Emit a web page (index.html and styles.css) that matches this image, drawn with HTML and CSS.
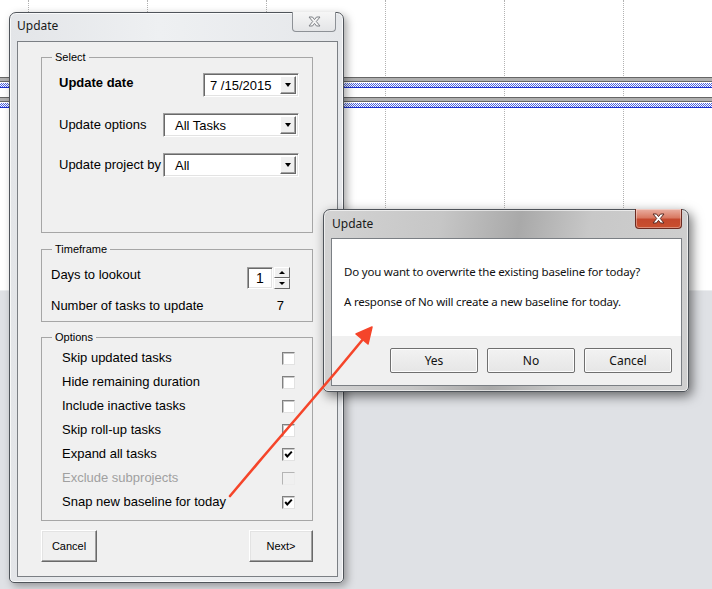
FILE: index.html
```html
<!DOCTYPE html>
<html lang="en">
<head>
    <meta charset="UTF-8">
    <meta name="viewport" content="width=device-width, initial-scale=1.0">
    <title>Update</title>
    <link rel="stylesheet" href="styles.css">
</head>
<body>
    <!-- project view behind the dialogs -->
    <div class="chart">
        <div class="grid-lines">
            <div class="grid-col"></div>
            <div class="grid-col"></div>
            <div class="grid-col"></div>
            <div class="grid-col"></div>
            <div class="grid-col"></div>
            <div class="grid-col"></div>
        </div>
        <div class="bars">
            <div class="bar"><div class="bar-rule"></div><div class="bar-fill"></div></div>
            <div class="bar"><div class="bar-rule"></div><div class="bar-fill"></div></div>
        </div>
    </div>
    <div class="sheet"></div>

    <!-- update wizard -->
    <div class="window wizard">
        <div class="titlebar">
            <span class="title">Update</span>
            <span class="close close-inactive">
                <svg width="13" height="11" viewBox="0 0 13 11"><path d="M1 1H4.5L6.5 3.6L8.5 1H12L8.3 5.5L12 10H8.5L6.5 7.4L4.5 10H1L4.7 5.5Z" fill="#f4f4f4" stroke="#7e8186" stroke-width="1"/></svg>
            </span>
        </div>
        <div class="client">
            <div class="group group-select">
                <span class="group-label">Select</span>
                <div class="group-body select-body">
                    <div class="field-row">
                        <span class="field-label strong">Update date</span>
                        <div class="combo date"><span class="combo-value">7 /15/2015</span><span class="drop"></span></div>
                    </div>
                    <div class="field-row">
                        <span class="field-label">Update options</span>
                        <div class="combo wide"><span class="combo-value">All Tasks</span><span class="drop"></span></div>
                    </div>
                    <div class="field-row">
                        <span class="field-label">Update project by</span>
                        <div class="combo wide"><span class="combo-value">All</span><span class="drop"></span></div>
                    </div>
                </div>
            </div>

            <div class="group group-time">
                <span class="group-label">Timeframe</span>
                <div class="group-body time-body">
                    <div class="field-row top">
                        <span class="field-label">Days to lookout</span>
                        <div class="spinner">
                            <span class="spin-box">1</span>
                            <span class="spin-buttons"><span class="spin-up"></span><span class="spin-down"></span></span>
                        </div>
                    </div>
                    <div class="field-row count-row">
                        <span class="field-label">Number of tasks to update</span>
                        <span class="count">7</span>
                    </div>
                </div>
            </div>

            <div class="group group-options">
                <span class="group-label">Options</span>
                <div class="group-body options-body">
                    <div class="option"><span>Skip updated tasks</span><span class="check"></span></div>
                    <div class="option"><span>Hide remaining duration</span><span class="check"></span></div>
                    <div class="option"><span>Include inactive tasks</span><span class="check"></span></div>
                    <div class="option"><span>Skip roll-up tasks</span><span class="check"></span></div>
                    <div class="option"><span>Expand all tasks</span><span class="check checked"><svg width="9" height="9" viewBox="0 0 9 9"><path d="M1.2 4L3.3 6.4L7.8 1.6" fill="none" stroke="#000" stroke-width="2"/></svg></span></div>
                    <div class="option disabled"><span>Exclude subprojects</span><span class="check"></span></div>
                    <div class="option"><span>Snap new baseline for today</span><span class="check checked"><svg width="9" height="9" viewBox="0 0 9 9"><path d="M1.2 4L3.3 6.4L7.8 1.6" fill="none" stroke="#000" stroke-width="2"/></svg></span></div>
                </div>
            </div>

            <div class="actions">
                <button class="btn3d btn-cancel">Cancel</button>
                <button class="btn3d btn-next">Next&gt;</button>
            </div>
        </div>
    </div>

    <!-- confirmation message box -->
    <div class="window msgbox">
        <div class="titlebar">
            <span class="title">Update</span>
            <span class="close close-active">
                <svg width="13" height="11" viewBox="0 0 13 11"><path d="M1 1H4.5L6.5 3.6L8.5 1H12L8.3 5.5L12 10H8.5L6.5 7.4L4.5 10H1L4.7 5.5Z" fill="#fff" stroke="#5a2a22" stroke-width="1"/></svg>
            </span>
        </div>
        <div class="client">
            <div class="msg-body">
                <p>Do you want to overwrite the existing baseline for today?</p>
                <p>A response of No will create a new baseline for today.</p>
            </div>
            <div class="msg-footer">
                <button class="msg-btn">Yes</button>
                <button class="msg-btn">No</button>
                <button class="msg-btn">Cancel</button>
            </div>
        </div>
    </div>

    <!-- hand drawn annotation -->
    <svg class="annotation" width="712" height="589" viewBox="0 0 712 589">
        <polyline points="230,496 263,457 300,414 335,373 364,338" fill="none" stroke="#f5452a" stroke-width="2.6" stroke-linecap="round" stroke-linejoin="round"/>
        <polygon points="372,327 356,334 368,344" fill="#f5452a" stroke="#f5452a" stroke-width="1.5" stroke-linejoin="round"/>
    </svg>
</body>
</html>
```

FILE: styles.css
```css
body {
    margin: 0;
    width: 712px;
    height: 589px;
    position: relative;
    overflow: hidden;
    font-family: "Liberation Sans", Arial, sans-serif;
    font-size: 13px;
    color: #000;
    background: #fff;
}

/* background chart */
.chart {
    display: grid;
    height: 290px;
}
.chart > div {
    grid-area: 1 / 1;
}
.grid-lines {
    display: flex;
    padding-left: 28px;
}
.grid-col {
    flex: none;
    width: 118px;
    border-left: 1px dotted #b2b2b2;
}
.bars {
    padding-top: 77px;
    display: flex;
    flex-direction: column;
    gap: 9px;
}
.bar {
    height: 11px;
}
.bar-rule {
    height: 3px;
    background: #b0b0b0;
    border-top: 1px solid #666;
    border-bottom: 1px solid #666;
}
.bar-fill {
    margin-top: 1px;
    height: 4px;
    background: repeating-conic-gradient(#4a62e4 0 25%, #fff 0 50%) 0 0 / 2px 2px;
    border-bottom: 1px solid #1b30cf;
}
.sheet {
    height: 298px;
    background: #dfe1e5;
    border-top: 1px solid #eceef0;
}

/* windows */
.window {
    position: absolute;
    box-sizing: border-box;
    display: flex;
    flex-direction: column;
    border: 1px solid #4f545a;
    border-radius: 7px 7px 5px 5px;
}
.wizard {
    left: 9px;
    top: 12px;
    width: 335px;
    height: 571px;
    padding: 0 5px 5px 7px;
    background: linear-gradient(90deg, #e3e5e8, #eef0f2 45%, #e5e7ea);
    box-shadow: inset 0 0 0 1px rgba(255,255,255,0.75), 3px 3px 9px rgba(0,0,0,0.35);
}
.msgbox {
    left: 323px;
    top: 209px;
    width: 366px;
    height: 183px;
    padding: 0 6px 5px 7px;
    background: linear-gradient(100deg, #d3d3d3 0%, #c6c6c6 30%, #a9a9a9 50%, #c8c8c8 68%, #d0d0d0 100%);
    box-shadow: inset 0 0 0 1px rgba(255,255,255,0.6), 3px 4px 12px rgba(0,0,0,0.55);
}
.titlebar {
    flex: none;
    height: 28px;
    display: flex;
    justify-content: space-between;
    align-items: flex-start;
}
.title {
    font-family: "Noto Sans", sans-serif;
    font-size: 12px;
    line-height: 16px;
    color: #1a1a1a;
    margin-top: 5px;
}
.msgbox .title {
    margin: 6px 0 0 1px;
}
.close {
    margin-top: -1px;
    height: 20px;
    box-sizing: border-box;
    display: flex;
    align-items: center;
    justify-content: center;
    border-radius: 0 0 4px 4px;
}
.close-inactive {
    width: 44px;
    margin-right: 2px;
    border: 1px solid #8d9196;
    border-top: none;
    background: linear-gradient(#f6f6f6, #e4e5e7);
}
.close-active {
    width: 47px;
    border: 1px solid #6b2a20;
    border-top: none;
    background: linear-gradient(#eab0a2, #d97a63 45%, #c4482d 55%, #c9502f);
    box-shadow: inset 0 0 0 1px rgba(255,255,255,0.35);
}
.client {
    flex: 1;
    border: 1px solid #7b7f84;
    background: #f0f0f0;
    display: flex;
    flex-direction: column;
}
.wizard .client {
    padding: 0 24px 0 23px;
}

/* group boxes */
.group {
    box-sizing: border-box;
    border: 1px solid #a6a6a6;
}
.group-label {
    display: block;
    width: max-content;
    margin: -7px 0 0 10px;
    padding: 0 3px;
    background: #f0f0f0;
    font-size: 11px;
    line-height: 13px;
}
.group-select {
    margin-top: 15px;
    height: 176px;
}
.group-time {
    margin-top: 16px;
    height: 73px;
}
.group-options {
    margin-top: 15px;
    height: 184px;
}
.group-body {
    display: flex;
    flex-direction: column;
}
.select-body {
    padding: 9px 13px 0 17px;
    gap: 16px;
}
.time-body {
    padding: 11px 22px 0 9px;
}
.options-body {
    padding: 2px 17px 0 20px;
}
.field-row {
    display: flex;
    justify-content: space-between;
    align-items: center;
    line-height: 16px;
}
.select-body .field-row {
    height: 24px;
}
.field-row.top {
    align-items: flex-start;
}
.strong {
    font-weight: bold;
    align-self: flex-start;
    margin-top: 2px;
}
.count-row {
    margin-top: 9px;
}
.count {
    margin-right: 6px;
}

/* combo boxes */
.combo {
    box-sizing: border-box;
    height: 24px;
    display: flex;
    align-items: stretch;
    padding: 2px;
    background: #fff;
    border: 1px solid;
    border-color: #a0a0a0 #fff #fff #a0a0a0;
    box-shadow: inset 1px 1px #696969, inset -1px -1px #e3e3e3;
}
.combo.date {
    width: 96px;
}
.combo.wide {
    width: 136px;
}
.combo-value {
    flex: 1;
    line-height: 20px;
    padding-left: 4px;
}
.combo.wide .combo-value {
    padding-left: 9px;
}
.drop {
    width: 16px;
    box-sizing: border-box;
    display: flex;
    align-items: center;
    justify-content: center;
    background: #f0f0f0;
    border: 1px solid;
    border-color: #fff #696969 #696969 #fff;
    box-shadow: inset -1px -1px #a0a0a0;
}
.drop::after {
    content: "";
    border-style: solid;
    border-width: 4px 3.5px 0;
    border-color: #000 transparent transparent;
}

/* spinner */
.spinner {
    display: flex;
    gap: 1px;
    height: 22px;
}
.spin-box {
    box-sizing: border-box;
    width: 26px;
    background: #fff;
    border: 1px solid;
    border-color: #a0a0a0 #fff #fff #a0a0a0;
    box-shadow: inset 1px 1px #696969, inset -1px -1px #e3e3e3;
    text-align: center;
    font-size: 14px;
    line-height: 20px;
}
.spin-buttons {
    width: 16px;
    display: flex;
    flex-direction: column;
}
.spin-buttons span {
    flex: 1;
    display: flex;
    align-items: center;
    justify-content: center;
    background: #f0f0f0;
    border: 1px solid;
    border-color: #fff #696969 #696969 #fff;
}
.spin-up::after,
.spin-down::after {
    content: "";
    border-style: solid;
    border-color: transparent;
}
.spin-up::after {
    border-width: 0 3px 3px;
    border-bottom-color: #000;
}
.spin-down::after {
    border-width: 3px 3px 0;
    border-top-color: #000;
}

/* option checkboxes */
.option {
    height: 24px;
    display: flex;
    justify-content: space-between;
    align-items: center;
    line-height: 16px;
}
.check {
    box-sizing: border-box;
    width: 13px;
    height: 13px;
    display: flex;
    align-items: center;
    justify-content: center;
    background: #fff;
    border: 1px solid;
    border-color: #808080 #e2e2e2 #e2e2e2 #808080;
    box-shadow: inset 1px 1px #c8c8c8;
}
.option.disabled {
    color: #a0a0a0;
}
.option.disabled .check {
    background: #f0f0f0;
    border-color: #b4b4b4 #ececec #ececec #b4b4b4;
    box-shadow: none;
}

/* wizard buttons */
.actions {
    margin-top: 9px;
    display: flex;
    justify-content: space-between;
}
.btn3d {
    height: 32px;
    padding: 0;
    font-family: "Liberation Sans", Arial, sans-serif;
    font-size: 11px;
    color: #000;
    background: #f0f0f0;
    border: 1px solid;
    border-color: #fff #696969 #696969 #fff;
    box-shadow: inset -1px -1px #a0a0a0, inset 1px 1px #e3e3e3;
}
.btn-cancel {
    width: 56px;
}
.btn-next {
    width: 64px;
}

/* message box */
.msg-body {
    height: 97px;
    box-sizing: border-box;
    padding: 25px 12px 0;
    background: #fff;
    font-family: "Noto Sans", sans-serif;
    font-size: 11.5px;
    letter-spacing: -0.2px;
    line-height: 16px;
    color: #111;
}
.msg-body p {
    margin: 0 0 14px;
}
.msg-footer {
    flex: 1;
    display: flex;
    justify-content: flex-end;
    align-items: flex-start;
    gap: 9px;
    padding: 12px 9px 0 0;
}
.msg-btn {
    width: 88px;
    height: 25px;
    padding: 0;
    font-family: "Noto Sans", sans-serif;
    font-size: 12px;
    color: #111;
    background: linear-gradient(#f2f2f2, #e6e6e6);
    border: 1px solid #6f6f6f;
    border-radius: 2px;
    box-shadow: inset 0 0 0 1px #fcfcfc;
}

.annotation {
    position: absolute;
    left: 0;
    top: 0;
    pointer-events: none;
}
```
